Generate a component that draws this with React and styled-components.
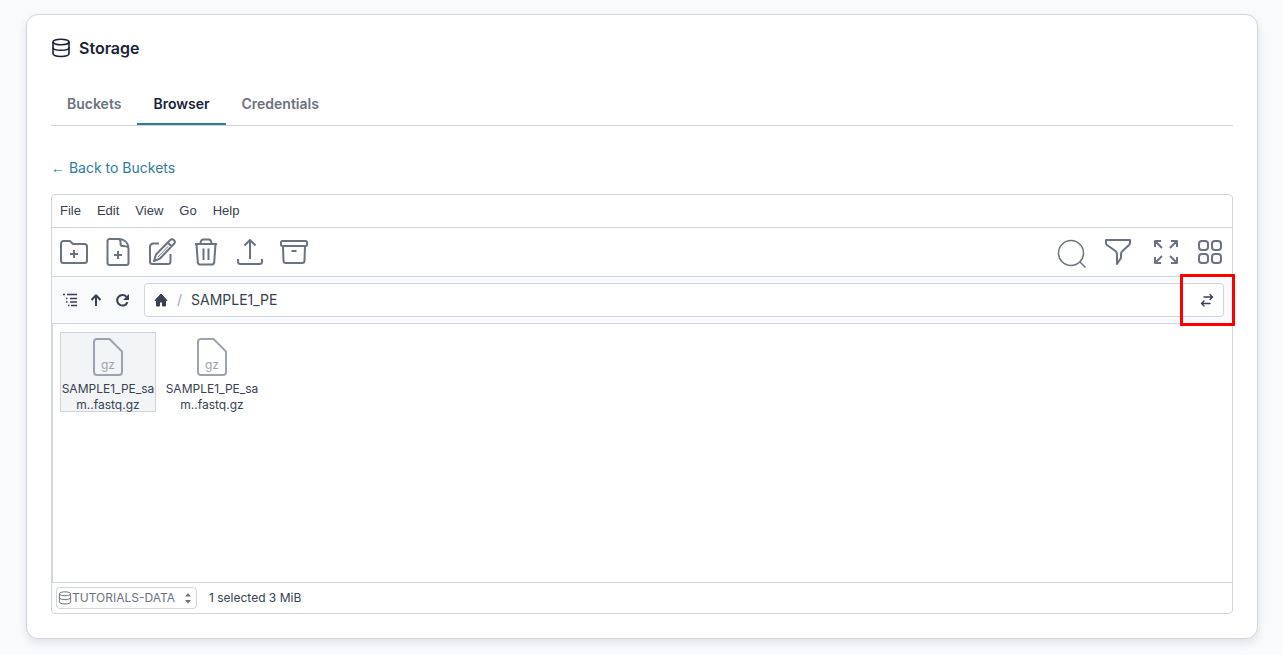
import React from 'react';
import styled, { createGlobalStyle, css } from 'styled-components';

const color = {
  page: '#f9fafc',
  surface: '#fff',
  line: '#d0d5dd',
  ink: '#1a2238',
  text: '#374151',
  muted: '#6b7280',
  faint: '#9ca3af',
  link: '#2f7ba0',
  accent: '#327a9c',
  mark: '#ff0000',
};

const GlobalStyle = createGlobalStyle`
  *, *::before, *::after {
    box-sizing: border-box;
  }
  body {
    margin: 0;
    background: ${color.page};
    color: ${color.text};
    font-family: Inter, 'Liberation Sans', sans-serif;
    font-size: 14px;
  }
  button, select {
    margin: 0;
    padding: 0;
    border: 0;
    background: none;
    color: inherit;
    font: inherit;
    cursor: pointer;
  }
`;

/* icons */

const Svg = styled.svg`
  display: block;
  flex: none;
  fill: none;
  stroke: currentColor;
  stroke-width: ${({ $weight }) => $weight || 2};
  stroke-linecap: ${({ $cap }) => $cap || 'butt'};
  stroke-linejoin: round;
`;

const Icon = ({ size = 32, box = 32, weight, cap, children }) => (
  <Svg
    width={size}
    height={size}
    viewBox={`0 0 ${box} ${box}`}
    $weight={weight}
    $cap={cap}
    aria-hidden="true"
  >
    {children}
  </Svg>
);

const DatabaseIcon = ({ size, weight }) => (
  <Icon size={size} box={20} weight={weight}>
    <ellipse cx="10" cy="4" rx="8" ry="2.8" />
    <path d="M2 4v11.6C2 17.4 5.4 18.5 10 18.5s8-1.1 8-2.9V4" />
    <path d="M2 9.5c0 1.6 3.4 2.8 8 2.8s8-1.2 8-2.8" />
  </Icon>
);

const NewFolderIcon = () => (
  <Icon>
    <path d="M3 7.5a2.5 2.5 0 0 1 2.5-2.5H11c1 0 1.5.3 2 1l2 2h11.5a2.5 2.5 0 0 1 2.500 2.500V24.500a2.500 2.500 0 0 1-2.500 2.500h-21A2.500 2.500 0 0 1 3 24.500zM16 14v8M12 18h8" />
  </Icon>
);

const NewFileIcon = () => (
  <Icon>
    <path d="M17 3H7.5A2 2 0 0 0 5.5 5v22a2 2 0 0 0 2 2h17a2 2 0 0 0 2-2V12c0-5-4-9-9.5-9zM17 3c2 1 1.5 3 1.5 5a2 2 0 0 0 2 2c3 0 5 0 6 2M16 15v8M12 19h8" />
  </Icon>
);

const EditIcon = () => (
  <Icon>
    <path d="M13 7.5H7A3.5 3.5 0 0 0 4 11v14.5A2.5 2.5 0 0 0 6.5 28H22a2.5 2.5 0 0 0 2.5-2.5V18" />
    <path d="M24 4.2a2.5 2.5 0 0 1 4 3.6L14 22.500l-6 2.500 2-6.500zM21.800 6.700l3.800 3.600" />
    <path d="M12 21L22 10.500" strokeWidth="1" />
  </Icon>
);

const TrashIcon = () => (
  <Icon>
    <path d="M5 8h22M6.5 8l1.3 18.5A2.5 2.5 0 0 0 10.3 28.5h11.4a2.5 2.5 0 0 0 2.5-2L25.5 8M10.5 8c0-3 1-4.5 3-4.5h5c2 0 3 1.5 3 4.500M13.500 12.500v11.500M18.500 12.500v11.500" />
  </Icon>
);

const UploadIcon = () => (
  <Icon>
    <path d="M16 23V4M10.5 9.5L16 4l5.5 5.5M4 23v2.5A2.5 2.5 0 0 0 6.5 28h19a2.5 2.5 0 0 0 2.5-2.5V23" />
  </Icon>
);

const ArchiveIcon = () => (
  <Icon>
    <rect x="3" y="5" width="26" height="5" rx="1.5" />
    <path d="M5 10l.5 14.5A2.5 2.5 0 0 0 8 27h16a2.5 2.5 0 0 0 2.5-2.5L27 10M13.5 15h5" />
  </Icon>
);

const SearchIcon = () => (
  <Icon weight={1.5}>
    <circle cx="15" cy="17" r="12.5" />
    <path d="M24 26l5.5 5.5" />
  </Icon>
);

const FilterIcon = () => (
  <Icon>
    <path d="M4 4h24v3c0 1-.4 1.5-1 2l-6.5 6c-1 1-1.500 2-1.500 3v4l-4 6V18c0-1-.500-2-1.500-3L5 9C4.400 8.500 4 8 4 7z" />
  </Icon>
);

const ExpandIcon = () => (
  <Icon>
    <path d="M7 11V5h6M7 5l7 7M23 5h6v6M29 5l-7 7M7 21v6h6M7 27l7-7M29 21v6h-6M29 27l-7-7" />
  </Icon>
);

const GridIcon = () => (
  <Icon>
    <rect x="5" y="5" width="9" height="9" rx="3" />
    <rect x="18" y="5" width="9" height="9" rx="3" />
    <rect x="5" y="18" width="9" height="9" rx="3" />
    <rect x="18" y="18" width="9" height="9" rx="3" />
  </Icon>
);

const TreeIcon = () => (
  <Icon size={16} box={16} weight={1.3}>
    <path d="M1 2.5h2M5 2.5h10M4 6.5h1.5M8 6.5h7M4 10h1.5M8 10h7M6 13.5h1.5M9 13.5h6" />
  </Icon>
);

const UpIcon = () => (
  <Icon size={16} box={16}>
    <path d="M8 14V3M3.5 8L8 3.2 12.5 8" />
  </Icon>
);

const ReloadIcon = () => (
  <Icon size={16} box={16}>
    <path d="M13.5 10A5.3 5.3 0 1 1 12.5 4.8" />
    <path d="M15 2v6H9z" fill="currentColor" stroke="none" />
  </Icon>
);

const HomeIcon = () => (
  <Icon size={16} box={16} weight={1}>
    <path d="M8 2L2 8.5h1.5V14h3v-4h3v4h3V8.5H14z" fill="currentColor" />
  </Icon>
);

const SwapIcon = () => (
  <Icon size={16} box={16} weight={1.4} cap="round">
    <path d="M5 5h8.5M11 2.5L13.5 5 11 7.5M11 11.5H3M5 9l-2.5 2.5L5 14" />
  </Icon>
);

const SortIcon = () => (
  <Icon size={12} box={12}>
    <path d="M3 4.5L6 1l3 3.5zM3 8l3 3.5L9 8z" fill="currentColor" stroke="none" />
  </Icon>
);

/* page */

const Page = styled.main`
  padding: 14px 25px 16px 26px;
`;

const Card = styled.section`
  padding: 23px 24px 24px;
  border: 1px solid ${color.line};
  border-radius: 12px;
  background: ${color.surface};
  box-shadow: 0 4px 8px rgba(16, 24, 40, 0.1);
`;

const Title = styled.h1`
  display: flex;
  align-items: center;
  gap: 8px;
  margin: 0;
  font-size: 16px;
  font-weight: 600;
  line-height: 20px;
  color: ${color.ink};
`;

const Tabs = styled.nav`
  display: flex;
  margin-top: 25px;
  border-bottom: 1px solid ${color.line};
`;

const Tab = styled.button`
  height: 42px;
  padding: 0 16px;
  border-bottom: 2px solid transparent;
  font-weight: 600;
  color: ${color.muted};
  ${({ $active }) =>
    $active &&
    css`
      border-color: ${color.accent};
      color: ${color.ink};
    `}
`;

const BackLink = styled.a`
  display: block;
  width: max-content;
  margin: 32px 0 16px;
  line-height: 20px;
  color: ${color.link};
  text-decoration: none;
`;

const BackArrow = styled.span`
  font-family: 'Liberation Sans', Arial, sans-serif;
`;

/* file manager */

const Manager = styled.div`
  border: 1px solid ${color.line};
  border-radius: 4px;
`;

const MenuBar = styled.div`
  display: flex;
  height: 33px;
  padding-bottom: 1px;
  border-bottom: 1px solid ${color.line};
  font-family: 'Liberation Sans', Arial, sans-serif;
  font-size: 13px;
`;

const MenuItem = styled.button`
  padding: 0 8px;
`;

const Toolbar = styled.div`
  display: flex;
  align-items: center;
  height: 49px;
  padding: 0 6px;
  border-bottom: 1px solid ${color.line};
  color: ${color.muted};
`;

const ToolGroup = styled.div`
  display: flex;
  align-items: center;
  gap: 12px;
  ${({ $end }) =>
    $end &&
    css`
      gap: 14px;
      margin-left: auto;
    `}
`;

const ToolButton = styled.button`
  display: flex;
`;

const PathBar = styled.div`
  display: flex;
  align-items: center;
  height: 47px;
  padding: 0 8px 0 10px;
  border-bottom: 1px solid ${color.line};
  background: ${color.page};
`;

const NavButtons = styled.div`
  display: flex;
  gap: 10px;
  margin-right: 14px;
`;

const Crumbs = styled.div`
  display: flex;
  flex: 1;
  align-items: center;
  gap: 8px;
  height: 34px;
  padding: 0 8px;
  border: 1px solid ${color.line};
  border-radius: 4px;
  background: ${color.surface};
  line-height: 18px;
`;

const Slash = styled.span`
  width: 6px;
  color: ${color.faint};
`;

const SwapArea = styled.div`
  position: relative;
  display: flex;
  margin-left: auto;
  &::after {
    position: absolute;
    inset: -18px -20px -18px -19px;
    border: 3px solid ${color.mark};
    content: '';
    pointer-events: none;
  }
`;

const Files = styled.div`
  display: flex;
  align-items: flex-start;
  gap: 8px;
  height: 258px;
  padding: 8px 7px;
  border-left: 1px solid ${color.line};
`;

const File = styled.button`
  display: flex;
  flex-direction: column;
  align-items: center;
  width: 96px;
  height: 80px;
  padding-top: 3px;
  border: 1px solid transparent;
  font-size: 12px;
  line-height: 16px;
  ${({ $selected }) =>
    $selected &&
    css`
      border-color: ${color.line};
      background: #f3f4f6;
    `}
`;

const FileGlyph = styled.svg`
  display: block;
  flex: none;
  margin-bottom: 3px;
  fill: none;
  stroke: ${color.faint};
  stroke-width: 2;
  stroke-linejoin: round;
  text {
    fill: ${color.faint};
    stroke: none;
    font-size: 12px;
    text-anchor: middle;
  }
`;

const StatusBar = styled.div`
  display: flex;
  align-items: center;
  gap: 12px;
  height: 31px;
  padding: 0 4px 1px;
  border-top: 1px solid ${color.line};
  font-size: 12px;
`;

const BucketPicker = styled.label`
  display: flex;
  align-items: center;
  width: 141px;
  height: 22px;
  padding: 0 2px 0 1px;
  border: 1px solid ${color.line};
  border-radius: 4px;
  color: ${color.muted};
`;

const BucketSelect = styled.select`
  flex: 1;
  min-width: 0;
  appearance: none;
  outline: none;
`;

const tabs = ['Buckets', 'Browser', 'Credentials'];
const menus = ['File', 'Edit', 'View', 'Go', 'Help'];
const fileActions = [
  ['New folder', NewFolderIcon],
  ['New file', NewFileIcon],
  ['Rename', EditIcon],
  ['Delete', TrashIcon],
  ['Upload', UploadIcon],
  ['Archive', ArchiveIcon],
];
const viewActions = [
  ['Search', SearchIcon],
  ['Filter', FilterIcon],
  ['Full screen', ExpandIcon],
  ['Icon view', GridIcon],
];
const navActions = [
  ['Tree', TreeIcon],
  ['Up', UpIcon],
  ['Reload', ReloadIcon],
];
const files = [
  { id: 1, lines: ['SAMPLE1_PE_sa', 'm..fastq.gz'], selected: true },
  { id: 2, lines: ['SAMPLE1_PE_sa', 'm..fastq.gz'], selected: false },
];

const renderActions = (actions) =>
  actions.map(([label, Glyph]) => (
    <ToolButton key={label} type="button" aria-label={label}>
      <Glyph />
    </ToolButton>
  ));

const App = () => (
  <>
    <GlobalStyle />
    <Page>
      <Card>
        <Title>
          <DatabaseIcon size={20} weight={1.6} />
          Storage
        </Title>
        <Tabs>
          {tabs.map((tab) => (
            <Tab key={tab} type="button" $active={tab === 'Browser'}>
              {tab}
            </Tab>
          ))}
        </Tabs>
        <BackLink href="#buckets">
          <BackArrow>←</BackArrow> Back to Buckets
        </BackLink>
        <Manager>
          <MenuBar>
            {menus.map((menu) => (
              <MenuItem key={menu} type="button">
                {menu}
              </MenuItem>
            ))}
          </MenuBar>
          <Toolbar>
            <ToolGroup>{renderActions(fileActions)}</ToolGroup>
            <ToolGroup $end>{renderActions(viewActions)}</ToolGroup>
          </Toolbar>
          <PathBar>
            <NavButtons>{renderActions(navActions)}</NavButtons>
            <Crumbs>
              <ToolButton type="button" aria-label="Home">
                <HomeIcon />
              </ToolButton>
              <Slash>/</Slash>
              <span>SAMPLE1_PE</span>
              <SwapArea>
                <ToolButton type="button" aria-label="Edit path">
                  <SwapIcon />
                </ToolButton>
              </SwapArea>
            </Crumbs>
          </PathBar>
          <Files>
            {files.map(({ id, lines, selected }) => (
              <File key={id} type="button" $selected={selected}>
                <FileGlyph width="32" height="42" viewBox="0 0 32 42" aria-hidden="true">
                  <path d="M5 3h12.5L30 15.5V36a3 3 0 0 1-3 3H5a3 3 0 0 1-3-3V6a3 3 0 0 1 3-3z" />
                  <text x="16" y="33">
                    gz
                  </text>
                </FileGlyph>
                {lines.map((line) => (
                  <span key={line}>{line}</span>
                ))}
              </File>
            ))}
          </Files>
          <StatusBar>
            <BucketPicker>
              <DatabaseIcon size={14} weight={1.4} />
              <BucketSelect aria-label="Bucket" defaultValue="TUTORIALS-DATA">
                <option>TUTORIALS-DATA</option>
              </BucketSelect>
              <SortIcon />
            </BucketPicker>
            <span>1 selected 3 MiB</span>
          </StatusBar>
        </Manager>
      </Card>
    </Page>
  </>
);

export default App;
